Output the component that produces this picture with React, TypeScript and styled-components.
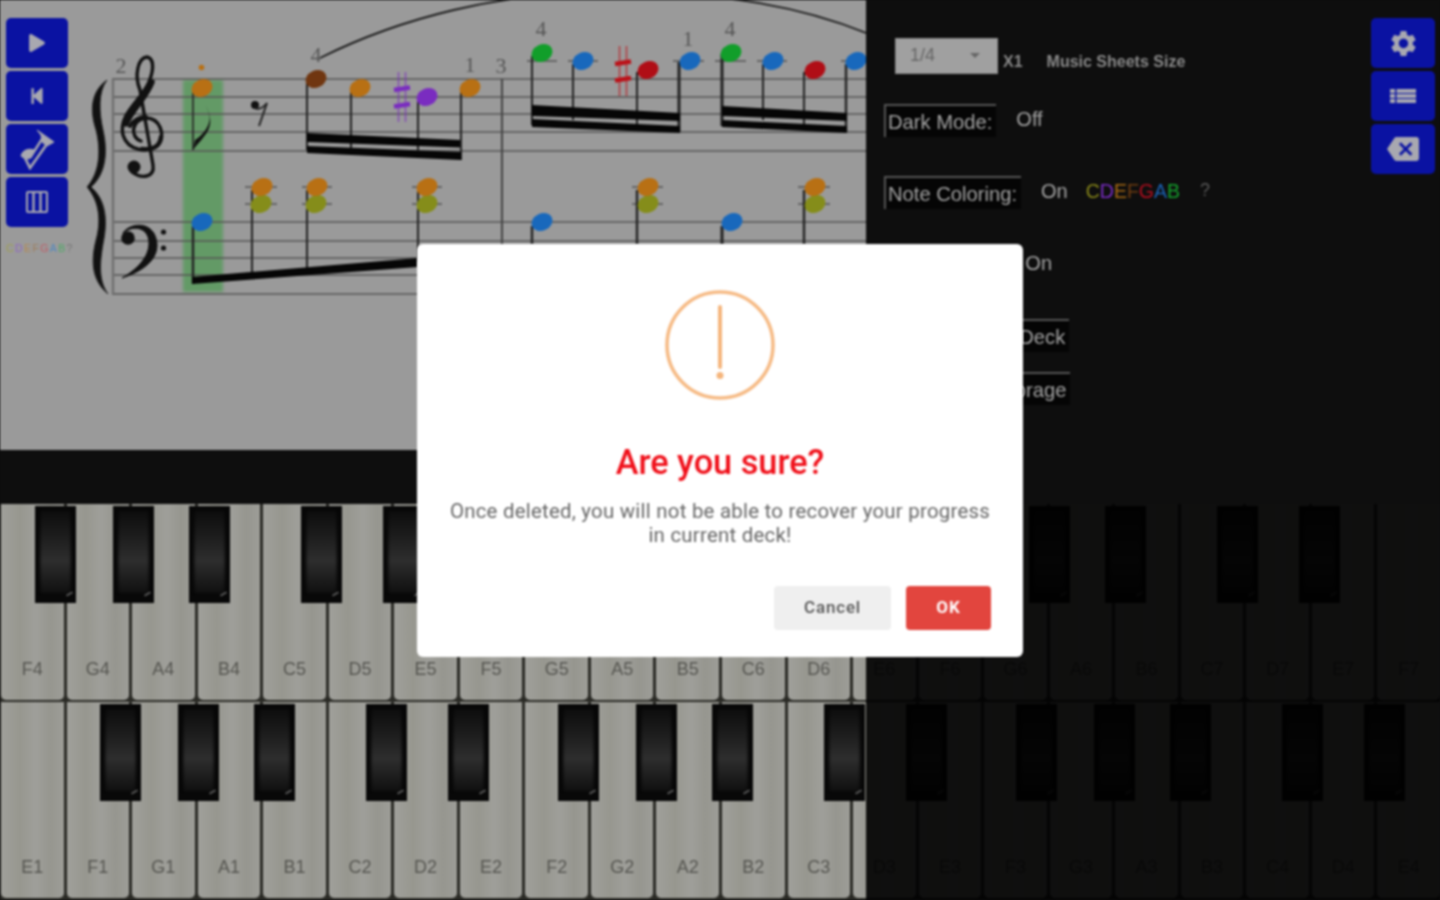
import React from "react";
import styled, { createGlobalStyle } from "styled-components";
import { FaPlay, FaStepBackward } from "react-icons/fa";
import { MdSettings, MdBackspace } from "react-icons/md";

const Global = createGlobalStyle`
  html, body { margin: 0; padding: 0; background: #0e0e0e; }
  body { font-family: "Liberation Sans", Arial, sans-serif; overflow: hidden; }
`;

const Page = styled.div`
  width: 1440px;
  height: 900px;
  display: flex;
  flex-direction: column;
  background: #0e0e0e;
  overflow: hidden;
  filter: blur(0.9px);
`;

const Top = styled.div`
  height: 450px;
  display: flex;
`;

const Sheet = styled.section`
  width: 866px;
  height: 450px;
  background: #9a9a9a;
  display: grid;
  overflow: hidden;
  & > * { grid-area: 1 / 1; }
`;

const Score = styled.svg`
  display: block;
`;

const Toolbar = styled.div`
  display: flex;
  flex-direction: column;
  gap: 3px;
  padding: 18px 0 0 6px;
  align-self: start;
  justify-self: start;
`;

const BlueButton = styled.div<{ $w?: number }>`
  width: ${(p) => p.$w ?? 62}px;
  height: 50px;
  background: #0a12a2;
  border-radius: 5px;
  display: flex;
  align-items: center;
  justify-content: center;
  color: #a8a8b0;
`;

const Legend = styled.div`
  display: flex;
  margin-top: 12px;
  font-size: 10.5px;
  line-height: 12px;
  letter-spacing: 1.4px;
  opacity: 0.7;
`;

const Tint = styled.span<{ $c: string }>`
  color: ${(p) => p.$c};
`;

const Panel = styled.section`
  flex: 1;
  display: flex;
  justify-content: space-between;
  padding: 18px 5px 0 18px;
`;

const Options = styled.div`
  display: flex;
  flex-direction: column;
  padding-top: 20px;
`;

const SizeRow = styled.div`
  display: flex;
  align-items: flex-end;
  margin: 0 0 30px 11px;
  height: 36px;
`;

const Select = styled.div`
  width: 103px;
  height: 36px;
  box-sizing: border-box;
  background: #a0a0a0;
  color: #666;
  font-size: 18px;
  display: flex;
  align-items: center;
  justify-content: space-between;
  padding: 0 18px 2px 15px;
  box-shadow: inset 0 0 0 1px #8a8a8a;
`;

const Caret = styled.i`
  width: 0;
  height: 0;
  border-left: 5px solid transparent;
  border-right: 5px solid transparent;
  border-top: 5px solid #666;
`;

const Small = styled.span<{ $ml: number }>`
  margin-left: ${(p) => p.$ml}px;
  color: #8a8a8a;
  font-size: 16px;
  font-weight: 700;
  line-height: 24px;
`;

const Row = styled.div<{ $after: number }>`
  display: flex;
  align-items: center;
  gap: 20px;
  height: 33px;
  margin-bottom: ${(p) => p.$after}px;
`;

const Label = styled.div`
  box-sizing: border-box;
  height: 33px;
  padding: 3px 4px 0 2px;
  border-top: 2px solid #555;
  border-left: 2px solid #555;
  background: #050505;
  color: #a4a4a4;
  font-size: 20.2px;
  line-height: 26px;
  white-space: nowrap;
`;

const Value = styled.span`
  color: #a4a4a4;
  font-size: 20px;
  line-height: 26px;
  margin-top: -4px;
`;

const Notes = styled.span`
  font-size: 19.5px;
  line-height: 26px;
  margin: -4px 0 0 -2px;
`;

const Help = styled.span`
  color: #5a5a5a;
  font-size: 18px;
  margin: -4px 0 0 0;
`;

const RightBar = styled.div`
  display: flex;
  flex-direction: column;
  gap: 3px;
`;

const Band = styled.div`
  height: 54px;
  background: #0e0e0e;
`;

const Piano = styled.div`
  position: relative;
  height: 198px;
  display: grid;
  grid-template-columns: repeat(22, 65.55px);
  background: #2a2a25;
  overflow: hidden;
`;

const WhiteKey = styled.div`
  margin: 0 2px 2px 1px;
  border-radius: 0 0 5px 5px;
  background: linear-gradient(90deg, #a0a09b 0%, #97978f 30%, #9f9f9a 55%, #96968f 78%, #9d9d98 100%);
  display: flex;
  align-items: flex-end;
  justify-content: center;
  padding-bottom: 19px;
  color: #555550;
  font-size: 18px;
  line-height: 24px;
`;

const BlackKey = styled.div<{ $x: number }>`
  position: absolute;
  top: 2px;
  left: ${(p) => p.$x}px;
  width: 41px;
  height: 97px;
  box-sizing: border-box;
  border: 3px solid #080808;
  border-bottom-width: 8px;
  background: linear-gradient(180deg, #0c0c0c 0%, #1c1c1c 30%, #2e2e2e 60%, #1a1a1a 85%, #0e0e0e 100%);
  box-shadow: inset 2px 0 3px #050505, inset -2px 0 3px #050505;
  &::after {
    content: "";
    position: absolute;
    right: 0;
    bottom: 0;
    width: 7px;
    height: 2px;
    background: #5c5c5c;
    transform: rotate(-30deg);
  }
`;

const NightShade = styled.div`
  position: absolute;
  top: 0;
  bottom: 0;
  left: 866px;
  right: 0;
  background: #181818;
  mix-blend-mode: multiply;
`;

const Backdrop = styled.div`
  position: fixed;
  inset: 0;
  display: flex;
  align-items: center;
  justify-content: center;
  padding-top: 1px;
  box-sizing: border-box;
  filter: blur(0.8px);
`;

const Modal = styled.div`
  width: 606px;
  height: 413px;
  box-sizing: border-box;
  background: #fff;
  border-radius: 6px;
  padding: 46px 32px 27px;
  display: flex;
  flex-direction: column;
  align-items: center;
  font-family: Roboto, "Liberation Sans", sans-serif;
`;

const Title = styled.h2`
  margin: 39px 0 0;
  color: #f0101a;
  font-size: 34.3px;
  line-height: 46px;
  font-weight: 500;
`;

const Message = styled.p`
  margin: 14px 0 0;
  width: 548px;
  text-align: center;
  color: #666;
  font-size: 20.4px;
  letter-spacing: 0.25px;
  line-height: 24px;
`;

const Footer = styled.div`
  margin-top: auto;
  align-self: flex-end;
  display: flex;
  gap: 15px;
`;

const Button = styled.button<{ $primary?: boolean }>`
  height: 44px;
  width: ${(p) => (p.$primary ? 85 : 117)}px;
  border: 0;
  border-radius: 4px;
  padding: 0 0 2px;
  font-family: inherit;
  font-size: 17px;
  letter-spacing: ${(p) => (p.$primary ? 1 : 0.8)}px;
  font-weight: ${(p) => (p.$primary ? 700 : 500)};
  background: ${(p) => (p.$primary ? "#e2453e" : "#efefef")};
  color: ${(p) => (p.$primary ? "#fff" : "#555")};
`;

const NOTE = {
  orange: "#b87014",
  brown: "#703610",
  purple: "#7a2cc0",
  blue: "#1868bc",
  green: "#119e2a",
  red: "#b00e16",
  olive: "#858d1a",
};

const trebleLines = [79, 97, 114, 132, 151];
const bassLines = [222, 241, 258, 275, 294];

const notes: [number, number, string][] = [
  [202, 88, NOTE.orange],
  [316, 79, NOTE.brown],
  [360, 88, NOTE.orange],
  [427, 97, NOTE.purple],
  [470, 88, NOTE.orange],
  [542, 53, NOTE.green],
  [583, 61, NOTE.blue],
  [648, 70, NOTE.red],
  [690, 61, NOTE.blue],
  [731, 53, NOTE.green],
  [773, 61, NOTE.blue],
  [815, 70, NOTE.red],
  [856, 61, NOTE.blue],
  [202, 222, NOTE.blue],
  [261, 204, NOTE.olive],
  [262, 187, NOTE.orange],
  [316, 204, NOTE.olive],
  [317, 187, NOTE.orange],
  [427, 204, NOTE.olive],
  [427, 187, NOTE.orange],
  [542, 222, NOTE.blue],
  [648, 204, NOTE.olive],
  [648, 187, NOTE.orange],
  [732, 222, NOTE.blue],
  [815, 204, NOTE.olive],
  [815, 187, NOTE.orange],
];

const stems: [number, number, number, number][] = [
  [193, 92, 150, 1.6],
  [307, 82, 150, 2],
  [351, 90, 148, 2],
  [418, 100, 150, 2],
  [461, 90, 160, 2],
  [532, 56, 125, 2],
  [573, 64, 120, 2],
  [637, 72, 125, 2],
  [679, 62, 132, 3],
  [722, 54, 126, 3],
  [763, 64, 120, 2],
  [804, 72, 125, 2],
  [846, 64, 132, 2.4],
  [193, 226, 284, 2.4],
  [252, 190, 275, 2],
  [307, 190, 272, 2],
  [418, 190, 262, 2],
  [532, 226, 245, 2.4],
  [637, 190, 245, 2.4],
  [722, 226, 245, 3],
  [804, 190, 245, 2.4],
];

const ledgers: [number, number, number][] = [
  [527, 557, 61],
  [568, 598, 61],
  [673, 704, 61],
  [715, 746, 61],
  [757, 787, 61],
  [841, 866, 61],
  [245, 277, 187],
  [245, 277, 204],
  [302, 332, 187],
  [302, 332, 204],
  [412, 442, 187],
  [412, 442, 204],
  [632, 663, 187],
  [632, 663, 204],
  [798, 830, 187],
  [798, 830, 204],
];

const beams = [
  "M307 133 L460 140 L460 147.5 L307 142Z",
  "M307 146 L461 152 L461 160 L307 153Z",
  "M532 105 L680 113 L680 121 L532 116Z",
  "M532 119 L680 126 L680 133 L532 127Z",
  "M722 106 L847 113 L847 121 L722 116Z",
  "M722 120 L847 126 L847 133 L722 127Z",
  "M192 277 L418 258 L418 267 L192 284Z",
];

const fingers: [number, number, string][] = [
  [121, 73, "2"],
  [316, 62, "4"],
  [470, 72, "1"],
  [501, 73, "3"],
  [541, 36, "4"],
  [688, 46, "1"],
  [730, 36, "4"],
];

function Sharp({ x, y, c }: { x: number; y: number; c: string }) {
  return (
    <g stroke={c}>
      <path d={`M${x - 3.5} ${y - 25}V${y + 25}M${x + 3.5} ${y - 25}V${y + 25}`} strokeWidth="1.6" opacity=".65" />
      <path d={`M${x - 8} ${y - 7} L${x + 8} ${y - 9.5}M${x - 8} ${y + 9.5} L${x + 8} ${y + 7}`} strokeWidth="4.5" />
    </g>
  );
}

function MusicSheet() {
  return (
    <Score width="866" height="450" viewBox="0 0 866 450">
      <defs>
        <filter id="soft" x="-20%" y="-5%" width="140%" height="110%">
          <feGaussianBlur stdDeviation="1.6" />
        </filter>
      </defs>
      <rect x="183" y="80" width="40" height="212" fill="#649a66" filter="url(#soft)" />
      <g stroke="#555" strokeWidth="1.5">
        {[...trebleLines, ...bassLines].map((y) => (
          <path key={y} d={`M112 ${y}H866`} />
        ))}
      </g>
      <path d="M113 79V294" stroke="#707070" strokeWidth="2.5" />
      <path d="M502 79V294" stroke="#444" strokeWidth="2" />
      <g stroke="#555" strokeWidth="1.5">
        {ledgers.map(([a, b, y], i) => (
          <path key={i} d={`M${a} ${y}H${b}`} />
        ))}
      </g>
      <g stroke="#222">
        {stems.map(([x, a, b, w], i) => (
          <path key={i} d={`M${x} ${a}V${b}`} strokeWidth={w} />
        ))}
      </g>
      <g fill="#060606">
        {beams.map((d) => (
          <path key={d} d={d} />
        ))}
      </g>
      <path d="M193 150 L195 140 C205 134 212 122 209 114 C208 110 206 106 204 102 C207 108 213 118 209 128 C206 136 199 142 193 150Z" fill="#111" />
      {/* brace */}
      <path d="M107 80 C90 92 90 112 96 130 C101 150 100 172 87 187 C100 202 101 222 96 240 C91 260 91 280 108 294 C98 280 100 262 103 244 C108 220 106 200 91 187 C106 174 108 152 103 130 C99 112 98 92 107 80Z" fill="#111" stroke="#222" strokeWidth=".8" />
      {/* treble clef */}
      <g fill="none" stroke="#111" strokeLinecap="round">
        <path d="M141 141 C129 137 132 119 146 118 C160 118 166 135 158 145 C150 153 128 152 123 135 C118 114 141 101 149 82 C155 67 153 58 147 57 C138 58 134 75 140 90 L153 165 C155 178 141 179 132 172" strokeWidth="3.4" />
        <path d="M126 124 C133 108 146 98 152 82" strokeWidth="5.5" />
        <path d="M161 137 C160 147 152 150 142 149" strokeWidth="4.5" />
        <path d="M130 126 C134 120 140 117 146 117" strokeWidth="4" />
      </g>
      <circle cx="134" cy="167" r="6.5" fill="#111" />
      {/* bass clef */}
      <circle cx="128" cy="238" r="6.8" fill="#111" />
      <path d="M123 233 C130 222 156 220 157 245 C157 262 140 272 122 278 C136 270 149 258 149 243 C149 228 134 224 123 233Z" fill="#111" stroke="#111" strokeWidth="1" />
      <circle cx="163.5" cy="232" r="2.6" fill="#111" />
      <circle cx="163.5" cy="248" r="2.6" fill="#111" />
      {/* rest */}
      <circle cx="255" cy="105" r="4" fill="#111" />
      <path d="M255 108 C259 110 263 108 267 103 L259 126" fill="none" stroke="#222" strokeWidth="2" />
      {/* slur */}
      <path d="M320 58 C400 18 500 -8 610 -8 C720 -8 800 6 866 33" fill="none" stroke="#1b1b1b" strokeWidth="1.8" />
      <Sharp x={402} y={97} c="#7a2cc0" />
      <Sharp x={623} y={71} c="#bc1219" />
      {notes.map(([x, y, c], i) => (
        <ellipse key={i} cx={x} cy={y} rx="10.8" ry="8.6" fill={c} transform={`rotate(-24 ${x} ${y})`} />
      ))}
      <circle cx="201.5" cy="67.5" r="2.8" fill={NOTE.orange} />
      <g fontFamily="'Liberation Serif', serif" fontSize="22" fill="#555" textAnchor="middle">
        {fingers.map(([x, y, t], i) => (
          <text key={i} x={x} y={y}>
            {t}
          </text>
        ))}
      </g>
    </Score>
  );
}

function PianoIcon() {
  return (
    <svg width="24" height="24" viewBox="0 0 24 24" fill="none" stroke="currentColor">
      <rect x="2" y="2" width="20" height="20" rx="1" strokeWidth="2" />
      <path d="M8.5 3V21M15.5 3V21" strokeWidth="2.4" />
    </svg>
  );
}

function InstrumentIcon() {
  return (
    <svg width="36" height="42" viewBox="0 0 36 42" fill="none" stroke="currentColor">
      <path d="M2 28 C3 22 10 20 15 22 L10 31 C7 31 4 30 2 28Z" fill="currentColor" strokeWidth="1" />
      <path d="M5 28 L11 40 L28 16" strokeWidth="2.6" />
      <path d="M11 30 L23 11" strokeWidth="2.4" />
      <path d="M18 2 L35 14 L28 18 L23 14 L22 7Z" fill="currentColor" strokeWidth="1" />
    </svg>
  );
}

function ListIcon() {
  return (
    <svg width="26" height="16" viewBox="0 0 26 16" fill="currentColor">
      <rect x="0" y="1" width="5" height="4" />
      <rect x="0" y="6" width="5" height="4" />
      <rect x="0" y="11" width="5" height="4" />
      <rect x="6.5" y="1" width="19.5" height="4" />
      <rect x="6.5" y="6" width="19.5" height="4" />
      <rect x="6.5" y="11" width="19.5" height="4" />
    </svg>
  );
}

const topKeys = ["F4","G4","A4","B4","C5","D5","E5","F5","G5","A5","B5","C6","D6","E6","F6","G6","A6","B6","C7","D7","E7","F7"];
const bottomKeys = ["E1","F1","G1","A1","B1","C2","D2","E2","F2","G2","A2","B2","C3","D3","E3","F3","G3","A3","B3","C4","D4","E4"];
const blackOffsets = [0, 78, 154, 266, 348];

function blackPositions(start: number) {
  const out: number[] = [];
  for (let o = 0; o < 4; o++) {
    for (const d of blackOffsets) {
      const x = start + o * 458 + d;
      if (x < 1400) out.push(x);
    }
  }
  return out;
}

function Keyboard({ labels, start }: { labels: string[]; start: number }) {
  return (
    <Piano>
      {labels.map((k) => (
        <WhiteKey key={k}>{k}</WhiteKey>
      ))}
      {blackPositions(start).map((x) => (
        <BlackKey key={x} $x={x} />
      ))}
      <NightShade />
    </Piano>
  );
}

const legend: [string, string][] = [
  ["C", "#a0a030"],
  ["D", "#8a50d0"],
  ["E", "#c08030"],
  ["F", "#a07040"],
  ["G", "#d04050"],
  ["A", "#3080d0"],
  ["B", "#30b050"],
  ["?", "#666"],
];

const coloring: [string, string][] = [
  ["C", "#87861a"],
  ["D", "#7a2cc4"],
  ["E", "#a86a14"],
  ["F", "#6e3c10"],
  ["G", "#b20e1e"],
  ["A", "#1a62b4"],
  ["B", "#14a02c"],
];

export default function App() {
  return (
    <>
      <Global />
      <Page>
        <Top>
          <Sheet>
            <MusicSheet />
            <Toolbar>
              <BlueButton><FaPlay size={18} /></BlueButton>
              <BlueButton><FaStepBackward size={18} /></BlueButton>
              <BlueButton><InstrumentIcon /></BlueButton>
              <BlueButton><PianoIcon /></BlueButton>
              <Legend>
                {legend.map(([l, c]) => (
                  <Tint key={l} $c={c}>{l}</Tint>
                ))}
              </Legend>
            </Toolbar>
          </Sheet>
          <Panel>
            <Options>
              <SizeRow>
                <Select>
                  1/4
                  <Caret />
                </Select>
                <Small $ml={5}>X1</Small>
                <Small $ml={24}>Music Sheets Size</Small>
              </SizeRow>
              <Row $after={39}>
                <Label>Dark Mode:</Label>
                <Value>Off</Value>
              </Row>
              <Row $after={39}>
                <Label>Note Coloring:</Label>
                <Value>On</Value>
                <Notes>
                  {coloring.map(([l, c]) => (
                    <Tint key={l} $c={c}>{l}</Tint>
                  ))}
                </Notes>
                <Help>?</Help>
              </Row>
              <Row $after={38}>
                <Label>Note Labels:</Label>
                <Value>On</Value>
              </Row>
              <Row $after={20}>
                <Label>Reset Current Deck</Label>
              </Row>
              <Row $after={0}>
                <Label>Clear Local Storage</Label>
              </Row>
            </Options>
            <RightBar>
              <BlueButton $w={64}><MdSettings size={31} /></BlueButton>
              <BlueButton $w={64}><ListIcon /></BlueButton>
              <BlueButton $w={64}><MdBackspace size={32} /></BlueButton>
            </RightBar>
          </Panel>
        </Top>
        <Band />
        <Keyboard labels={topKeys} start={35} />
        <Keyboard labels={bottomKeys} start={100} />
      </Page>
      <Backdrop>
        <Modal>
          <svg width="110" height="110" viewBox="0 0 110 110" fill="none">
            <circle cx="55" cy="55" r="53" stroke="#f6bb86" strokeWidth="3.6" />
            <path d="M55 17V77" stroke="#f5b57c" strokeWidth="4" strokeLinecap="round" />
            <circle cx="55" cy="85.5" r="3.5" fill="#f5b57c" />
          </svg>
          <Title>Are you sure?</Title>
          <Message>Once deleted, you will not be able to recover your progress in current deck!</Message>
          <Footer>
            <Button>Cancel</Button>
            <Button $primary>OK</Button>
          </Footer>
        </Modal>
      </Backdrop>
    </>
  );
}
